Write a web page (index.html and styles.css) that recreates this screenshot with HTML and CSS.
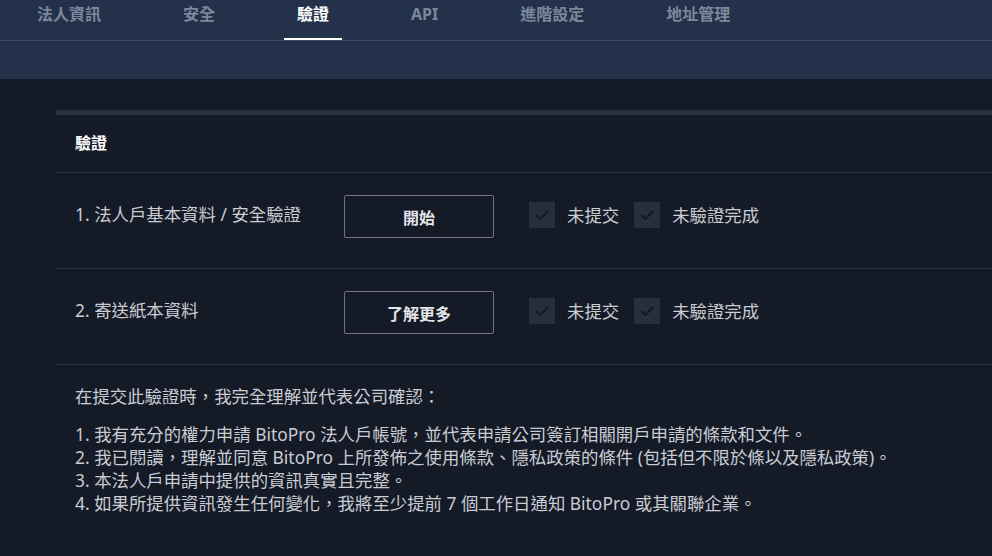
FILE: index.html
```html
<!DOCTYPE html>
<html lang="zh-Hant">
<head>
    <meta charset="UTF-8">
    <meta name="viewport" content="width=device-width, initial-scale=1.0">
    <title>驗證</title>
    <link rel="stylesheet" href="styles.css">
</head>
<body>
    <div class="topbar">
        <nav class="tabs">
            <a class="tab">法人資訊</a>
            <a class="tab">安全</a>
            <a class="tab active">驗證</a>
            <a class="tab">API</a>
            <a class="tab">進階設定</a>
            <a class="tab">地址管理</a>
        </nav>
    </div>

    <div class="main">
        <div class="card">
            <div class="card-title">驗證</div>

            <div class="step">
                <div class="step-label">1. 法人戶基本資料 / 安全驗證</div>
                <button class="btn">開始</button>
                <div class="status">
                    <span class="check"><svg viewBox="0 0 26 26" width="26" height="26"><path d="M7.5 13.5l3.8 3.6 7.2-7.6" fill="none" stroke="#151a27" stroke-width="2.4" stroke-linecap="round" stroke-linejoin="round"/></svg></span>
                    <span class="status-text">未提交</span>
                </div>
                <div class="status">
                    <span class="check"><svg viewBox="0 0 26 26" width="26" height="26"><path d="M7.5 13.5l3.8 3.6 7.2-7.6" fill="none" stroke="#151a27" stroke-width="2.4" stroke-linecap="round" stroke-linejoin="round"/></svg></span>
                    <span class="status-text">未驗證完成</span>
                </div>
            </div>

            <div class="step">
                <div class="step-label">2. 寄送紙本資料</div>
                <button class="btn">了解更多</button>
                <div class="status">
                    <span class="check"><svg viewBox="0 0 26 26" width="26" height="26"><path d="M7.5 13.5l3.8 3.6 7.2-7.6" fill="none" stroke="#151a27" stroke-width="2.4" stroke-linecap="round" stroke-linejoin="round"/></svg></span>
                    <span class="status-text">未提交</span>
                </div>
                <div class="status">
                    <span class="check"><svg viewBox="0 0 26 26" width="26" height="26"><path d="M7.5 13.5l3.8 3.6 7.2-7.6" fill="none" stroke="#151a27" stroke-width="2.4" stroke-linecap="round" stroke-linejoin="round"/></svg></span>
                    <span class="status-text">未驗證完成</span>
                </div>
            </div>

            <div class="terms">
                <p class="terms-intro">在提交此驗證時，我完全理解並代表公司確認：</p>
                <ol class="terms-list">
                    <li>1. 我有充分的權力申請 BitoPro 法人戶帳號，並代表申請公司簽訂相關開戶申請的條款和文件。</li>
                    <li>2. 我已閱讀，理解並同意 BitoPro 上所發佈之使用條款、隱私政策的條件 (包括但不限於條以及隱私政策)。</li>
                    <li>3. 本法人戶申請中提供的資訊真實且完整。</li>
                    <li>4. 如果所提供資訊發生任何變化，我將至少提前 7 個工作日通知 BitoPro 或其關聯企業。</li>
                </ol>
            </div>
        </div>
    </div>
</body>
</html>
```

FILE: styles.css
```css
body {
    margin: 0;
    background-color: #151a27;
    color: #c9ccd3;
    font-family: "Noto Sans", "Noto Sans CJK TC", sans-serif;
    overflow: hidden;
}
.topbar {
    background-color: #24314a;
    height: 79px;
}
.tabs {
    display: flex;
    gap: 56px;
    padding-left: 24px;
    height: 40px;
    border-bottom: 1px solid #3d4962;
}
.tab {
    padding: 0 13px;
    font-size: 16px;
    font-weight: 700;
    line-height: 29px;
    color: #7c879b;
    border-bottom: 2px solid transparent;
    box-sizing: border-box;
    height: 40px;
    cursor: pointer;
}
.tab.active {
    color: #fff;
    border-bottom-color: #fff;
}
.main {
    padding: 31px 0 0 56px;
}
.card {
    border-top: 5px solid #2c313f;
}
.card-title {
    padding: 0 19px;
    height: 57px;
    line-height: 57px;
    font-size: 16px;
    font-weight: 700;
    color: #fff;
    border-bottom: 1px solid #2c313f;
}
.step {
    display: flex;
    align-items: center;
    padding: 22px 19px 30px;
    border-bottom: 1px solid #2c313f;
}
.step-label {
    width: 269px;
    font-size: 17.4px;
    margin-top: -6px;
}
.btn {
    width: 150px;
    height: 43px;
    background: transparent;
    border: 1px solid #70747e;
    border-radius: 2px;
    color: #e4e5e8;
    font-family: inherit;
    font-size: 16px;
    font-weight: 700;
    margin-right: 35px;
}
.status {
    display: flex;
    align-items: center;
    gap: 12px;
    margin-right: 15px;
    margin-top: -4px;
}
.check {
    display: block;
    width: 26px;
    height: 26px;
    background-color: #292e3b;
}
.check svg {
    display: block;
}
.status-text {
    font-size: 17.4px;
}
.terms {
    padding: 20px 19px;
    font-size: 17.4px;
}
.terms-intro {
    margin: 0 0 15px;
    line-height: 23px;
}
.terms-list {
    list-style: none;
    margin: 0;
    padding: 0;
    line-height: 23px;
}
```
